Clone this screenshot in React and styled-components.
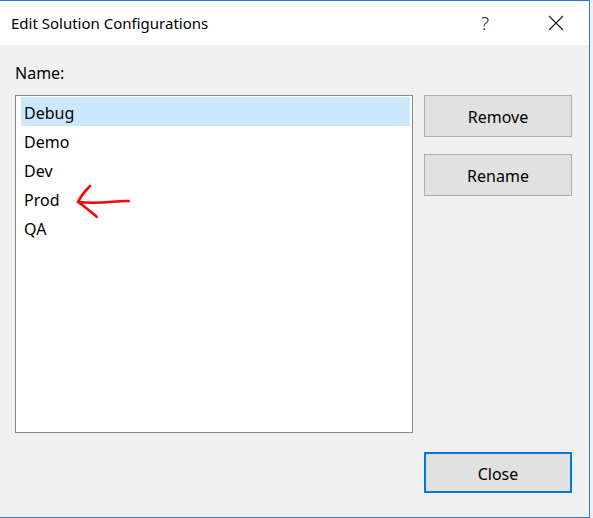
import React from "react";
import styled, { createGlobalStyle } from "styled-components";

const GlobalStyle = createGlobalStyle`
    html, body {
        margin: 0;
        padding: 0;
        background: #f0f0f0;
    }
    body {
        font-family: "Noto Sans", "Segoe UI", sans-serif;
        color: #000000;
    }
`

const Window = styled.div`
    width: 589px;
    height: 516px;
    border-top: 1px solid #2b7bd3;
    border-right: 1px solid #2b7bd3;
    border-bottom: 1px solid #2b7bd3;
    display: flex;
    flex-direction: column;
    background: #f0f0f0;
`

const TitleBar = styled.div`
    height: 44px;
    background: #ffffff;
    display: flex;
    align-items: center;
    padding-left: 11px;
`

const Title = styled.div`
    flex: 1;
    font-size: 15px;
`

const TitleButton = styled.div`
    width: ${p => p.w}px;
    height: 44px;
    display: flex;
    align-items: center;
    justify-content: center;
    font-size: 19px;
    font-weight: 300;
    color: #1a1a1a;
`

const Body = styled.div`
    flex: 1;
    display: grid;
    grid-template-columns: 398px 148px;
    grid-template-rows: auto 338px auto;
    align-content: start;
    column-gap: 11px;
    padding: 18px 0 0 15px;
`

const Label = styled.div`
    grid-column: 1 / 3;
    font-size: 16px;
    line-height: 20px;
    margin-bottom: 12px;
`

const ListBox = styled.div`
    position: relative;
    border: 1px solid #828790;
    background: #ffffff;
    padding: 1px 2px 1px 5px;
`

const Item = styled.div`
    height: 29px;
    box-sizing: border-box;
    display: flex;
    align-items: center;
    padding: 2px 0 0 3px;
    font-size: 16px;
    background: ${p => (p.selected ? "#cce8ff" : "transparent")};
`

const Buttons = styled.div`
    display: flex;
    flex-direction: column;
    gap: 17px;
`

const Button = styled.div`
    height: ${p => (p.primary ? "41px" : "42px")};
    box-sizing: border-box;
    display: flex;
    align-items: center;
    justify-content: center;
    padding-top: 2px;
    background: #e1e1e1;
    border: ${p => (p.primary ? "2px solid #0078d7" : "1px solid #adadad")};
    font-size: 16px;
`

const Footer = styled.div`
    grid-column: 2;
    margin-top: 19px;
`

const ArrowMark = styled.svg`
    position: absolute;
    left: 60px;
    top: 87px;
`

const items = ["Debug", "Demo", "Dev", "Prod", "QA"];

function App() {
    return (
        <>
            <GlobalStyle />
            <Window>
                <TitleBar>
                    <Title>Edit Solution Configurations</Title>
                    <TitleButton w={76}>?</TitleButton>
                    <TitleButton w={66}>
                        <svg width="16" height="16" viewBox="0 0 16 16">
                            <path d="M1 1 L15 15 M15 1 L1 15" stroke="#1a1a1a" strokeWidth="1.1" fill="none" />
                        </svg>
                    </TitleButton>
                </TitleBar>
                <Body>
                    <Label>Name:</Label>
                    <ListBox>
                        {items.map((name, i) => (
                            <Item key={name} selected={i === 0}>{name}</Item>
                        ))}
                        <ArrowMark width="60" height="40" viewBox="0 0 60 40">
                            <path
                                d="M52.7 18 C 40 17.2, 26 21.5, 2 19 M14 3 C 9 8, 5 13, 2 19 M2 19 C 8 23, 14 28, 20.7 33.7"
                                stroke="#ff0000"
                                strokeWidth="2.6"
                                strokeLinecap="round"
                                fill="none"
                            />
                        </ArrowMark>
                    </ListBox>
                    <Buttons>
                        <Button>Remove</Button>
                        <Button>Rename</Button>
                    </Buttons>
                    <Footer>
                        <Button primary>Close</Button>
                    </Footer>
                </Body>
            </Window>
        </>
    );
}

export default App;
